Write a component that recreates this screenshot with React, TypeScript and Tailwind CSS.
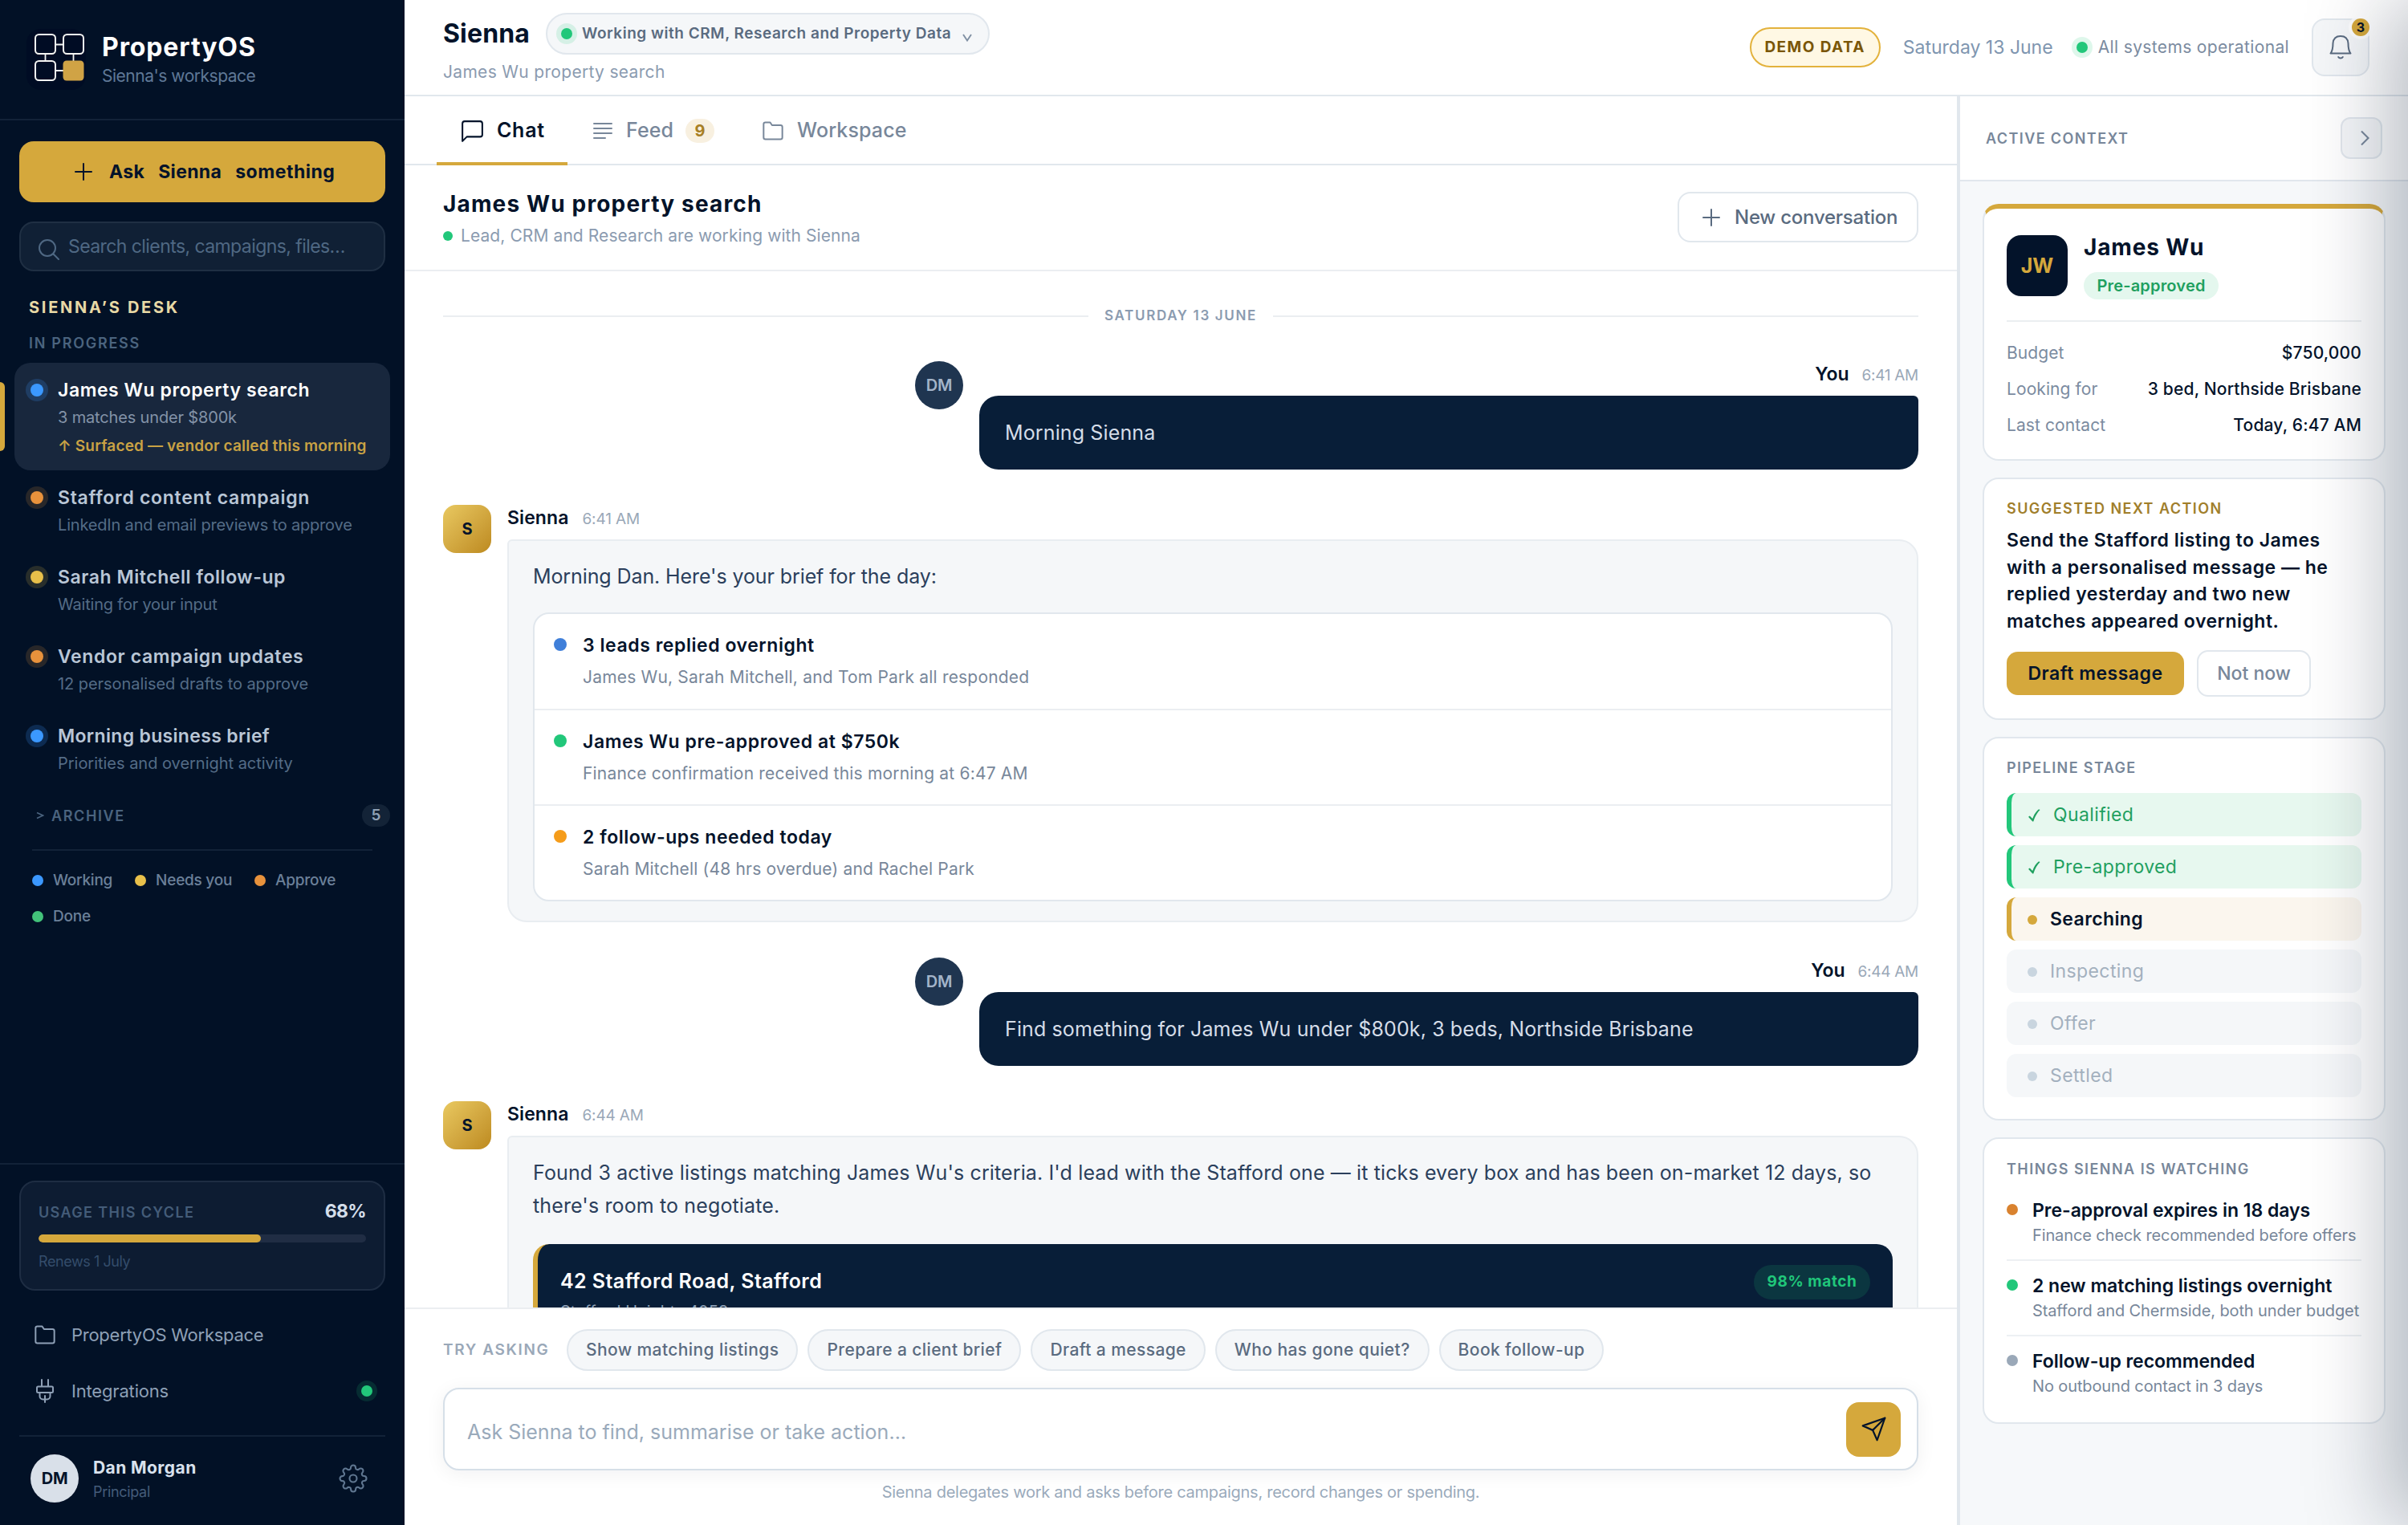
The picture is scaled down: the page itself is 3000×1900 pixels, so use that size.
import React from 'react';
import { FiFolder, FiMessageSquare, FiSend, FiSettings } from 'react-icons/fi';
import clsx from 'clsx';

interface DeskItem {
  title: string;
  sub: string;
  note?: string;
  dot: string;
  titleClass: string;
  subClass: string;
}

const deskItems: DeskItem[] = [
  {
    title: 'James Wu property search',
    sub: '3 matches under $800k',
    note: '↑ Surfaced — vendor called this morning',
    dot: 'bg-[#3b98ff] ring-[#3b98ff]/20',
    titleClass: 'tracking-[0.024em]',
    subClass: 'tracking-[-0.008em]',
  },
  {
    title: 'Stafford content campaign',
    sub: 'LinkedIn and email previews to approve',
    dot: 'bg-[#e8923c] ring-[#e8923c]/17',
    titleClass: 'tracking-[0.031em]',
    subClass: 'tracking-[-0.009em]',
  },
  {
    title: 'Sarah Mitchell follow-up',
    sub: 'Waiting for your input',
    dot: 'bg-[#e8c04a] ring-[#e8c04a]/17',
    titleClass: 'tracking-[0.024em]',
    subClass: 'tracking-[-0.01em]',
  },
  {
    title: 'Vendor campaign updates',
    sub: '12 personalised drafts to approve',
    dot: 'bg-[#e8923c] ring-[#e8923c]/17',
    titleClass: 'tracking-[0.027em]',
    subClass: 'tracking-[-0.003em]',
  },
  {
    title: 'Morning business brief',
    sub: 'Priorities and overnight activity',
    dot: 'bg-[#3b98ff] ring-[#3b98ff]/20',
    titleClass: 'tracking-[0.014em]',
    subClass: 'tracking-[-0.001em]',
  },
];

const legend = [
  { label: 'Working', dot: 'bg-[#3b98ff]' },
  { label: 'Needs you', dot: 'bg-[#e8c04a]' },
  { label: 'Approve', dot: 'bg-[#e8923c]' },
  { label: 'Done', dot: 'bg-[#42c27a]' },
];

const brief = [
  { title: '3 leads replied overnight', sub: 'James Wu, Sarah Mitchell, and Tom Park all responded', dot: 'bg-[#3f7fd9]' },
  { title: 'James Wu pre-approved at $750k', sub: 'Finance confirmation received this morning at 6:47 AM', dot: 'bg-[#22c77a]' },
  { title: '2 follow-ups needed today', sub: 'Sarah Mitchell (48 hrs overdue) and Rachel Park', dot: 'bg-[#f59c1a]' },
];

const prompts = ['Show matching listings', 'Prepare a client brief', 'Draft a message', 'Who has gone quiet?', 'Book follow-up'];

const details = [
  { label: 'Budget', value: '$750,000' },
  { label: 'Looking for', value: '3 bed, Northside Brisbane' },
  { label: 'Last contact', value: 'Today, 6:47 AM' },
];

const stages = [
  { label: 'Qualified', state: 'done' },
  { label: 'Pre-approved', state: 'done' },
  { label: 'Searching', state: 'current' },
  { label: 'Inspecting', state: 'todo' },
  { label: 'Offer', state: 'todo' },
  { label: 'Settled', state: 'todo' },
];

const watching = [
  { title: 'Pre-approval expires in 18 days', sub: 'Finance check recommended before offers', dot: 'bg-[#d9822f]' },
  { title: '2 new matching listings overnight', sub: 'Stafford and Chermside, both under budget', dot: 'bg-[#22c77a]' },
  { title: 'Follow-up recommended', sub: 'No outbound contact in 3 days', dot: 'bg-[#9aa8b8]' },
];

function PlusIcon({ className }: { className?: string }) {
  return (
    <svg viewBox="0 0 22 22" fill="none" stroke="currentColor" strokeWidth="2" strokeLinecap="round" className={clsx('size-[22px] shrink-0', className)}>
      <path d="M11 1v20M1 11h20" />
    </svg>
  );
}

function Logo() {
  return (
    <div className="flex h-[76px] w-[74px] items-center justify-center rounded-[18px] bg-[#000c24] pb-[5px] pl-[7px]">
      <svg viewBox="0 0 62 60" fill="none" stroke="#f4f4f2" strokeWidth="2" className="h-[60px] w-[62px] shrink-0">
        <rect x="1" y="1" width="25" height="24" rx="4.5" />
        <rect x="36" y="1" width="25" height="24" rx="4.5" />
        <rect x="1" y="34" width="25" height="24" rx="4.5" />
        <path d="M26 13.5h10M26 46h10M13.5 25v9M48.5 25v9" strokeWidth="1.8" />
        <rect x="35.5" y="33.5" width="26" height="25" rx="4.5" fill="#d0a345" stroke="none" />
      </svg>
    </div>
  );
}

function Sidebar() {
  return (
    <aside className="flex h-full w-[504px] shrink-0 flex-col bg-[#021126]">
      <div className="flex h-[150px] shrink-0 gap-[20px] border-b-2 border-[#122238] pt-[36px] pl-[33px]">
        <Logo />
        <div className="pt-[7px]">
          <div className="text-[32px] leading-[32px] font-bold tracking-[0.028em] text-white">PropertyOS</div>
          <div className="mt-[6px] text-[21px] leading-[28px] tracking-[-0.023em] text-[#5f7896]">Sienna's workspace</div>
        </div>
      </div>

      <button className="mx-6 mt-[26px] flex h-[76px] shrink-0 items-center rounded-[18px] bg-[#d5a83c] pl-[69px] text-[23px] font-bold tracking-[0.015em] text-[#03132a]">
        <PlusIcon className="mr-[21px]" />
        <span className="flex gap-[17px] pt-[1px]">
          <span>Ask</span>
          <span>Sienna</span>
          <span className="tracking-[0.022em]">something</span>
        </span>
      </button>

      <div className="mx-6 mt-6 flex h-[62px] shrink-0 items-center rounded-[18px] border-2 border-[#1f2f43] bg-[#102035] pl-[22px] text-[#4f6883]">
        <svg viewBox="0 0 26 26" fill="none" stroke="currentColor" strokeWidth="2" strokeLinecap="round" className="mt-[7px] size-[26px]">
          <circle cx="11" cy="11" r="10" />
          <path d="M18.5 18.5 25 25" />
        </svg>
        <span className="ml-[11px] text-[23px] leading-[28px] tracking-[-0.025em]">Search clients, campaigns, files…</span>
      </div>

      <div className="mt-[33px] pl-[36px] text-[20px] leading-[24px] font-bold tracking-[0.137em] text-[#e8d9a5]">SIENNA’S DESK</div>
      <div className="mt-[21px] pl-[36px] text-[18px] leading-[24px] font-semibold tracking-[0.096em] text-[#4b647f]">IN PROGRESS</div>

      <div className="mt-[12px] flex flex-col">
        {deskItems.map((item, i) => (
          <div
            key={item.title}
            className={clsx('relative mx-[18px] flex pt-5 pl-5', i === 0 ? 'h-[134px] rounded-[20px] bg-[#18273d]' : 'h-[99px]')}
          >
            {i === 0 && <span className="absolute top-6 -left-[18px] h-[86px] w-[6px] rounded-r-[6px] bg-[#d5a83c]" />}
            <span className={clsx('mt-[6px] size-4 shrink-0 rounded-full ring-6', item.dot)} />
            <div className="ml-[18px] whitespace-nowrap">
              <div className={clsx('text-[23px] leading-[28px] font-semibold', item.titleClass, i === 0 ? 'text-white' : 'text-[#b9c6d6]')}>
                {item.title}
              </div>
              <div className={clsx('mt-2 text-[20px] leading-[24px]', item.subClass, i === 0 ? 'text-[#8393a8]' : 'text-[#546c86]')}>
                {item.sub}
              </div>
              {item.note && (
                <div className="mt-3 text-[19px] leading-[24px] font-semibold tracking-[0.008em] text-[#c9a244]">{item.note}</div>
              )}
            </div>
          </div>
        ))}
      </div>

      <div className="mx-[18px] mt-5 flex h-7 items-center pl-[27px] text-[18px] font-semibold text-[#4b647f]">
        <svg viewBox="0 0 10 10" fill="none" stroke="currentColor" strokeWidth="1.6" className="size-[10px]">
          <path d="M1 1.5 8.5 5 1 8.5" />
        </svg>
        <span className="ml-[9px] tracking-[0.09em]">ARCHIVE</span>
        <span className="ml-auto flex h-7 w-[35px] items-center justify-center rounded-full bg-[#132337] text-[19px] text-[#8fa1b5]">5</span>
      </div>

      <div className="mx-10 mt-7 flex flex-wrap gap-x-7 gap-y-[21px] border-t-2 border-[#122238] pt-[25px] text-[19px] leading-[24px] font-medium tracking-[-0.013em] text-[#6b8099]">
        {legend.map((entry) => (
          <span key={entry.label} className="flex items-center gap-3">
            <span className={clsx('size-[14px] rounded-full', entry.dot)} />
            {entry.label}
          </span>
        ))}
      </div>

      <div className="mt-auto h-[451px] shrink-0 border-t-2 border-[#122238] px-6 pt-5">
        <div className="h-[137px] rounded-[20px] border-2 border-[#1e2d43] bg-[#0d1c32] px-[22px] pt-[22px]">
          <div className="flex h-7 items-baseline justify-between leading-[28px]">
            <span className="text-[18px] font-semibold tracking-[0.076em] text-[#445c79]">USAGE THIS CYCLE</span>
            <span className="text-[23px] font-bold tracking-[-0.03em] text-[#d4deea]">68%</span>
          </div>
          <div className="mt-[15px] h-[10px] overflow-hidden rounded-full bg-[#202d44]">
            <div className="h-full w-[68%] rounded-full bg-[#d5a83c]" />
          </div>
          <div className="mt-[12px] text-[18px] leading-[24px] tracking-[-0.024em] text-[#344d6b]">Renews 1 July</div>
        </div>

        <div className="mt-5 flex h-[70px] items-center pl-[18px] text-[22px] tracking-[-0.012em] text-[#8ea0b6]">
          <FiFolder className="size-[28px]" strokeWidth={1.7} />
          <span className="ml-[19px]">PropertyOS Workspace</span>
        </div>
        <div className="flex h-[70px] items-center pr-4 pl-[18px] text-[22px] tracking-[-0.008em] text-[#8ea0b6]">
          <svg viewBox="0 0 28 30" fill="none" stroke="currentColor" strokeWidth="2" strokeLinecap="round" strokeLinejoin="round" className="h-[30px] w-[28px]">
            <path d="M10 1v8M18 1v8" />
            <rect x="4" y="9.5" width="20" height="7.5" rx="1.5" />
            <path d="M7.5 17v4.5a4 4 0 0 0 4 4h5a4 4 0 0 0 4-4V17" />
            <path d="M14 21v8" />
          </svg>
          <span className="ml-[19px]">Integrations</span>
          <span className="ml-auto size-[14px] rounded-full bg-[#22c77a] ring-6 ring-[#22c77a]/15" />
        </div>

        <div className="mt-5 flex items-start border-t-2 border-[#122238] pt-[22px] pl-[14px]">
          <div className="flex size-[60px] items-center justify-center rounded-full bg-[#d9e0e9] text-[20px] font-bold tracking-[-0.02em] text-[#03132a]">DM</div>
          <div className="ml-[18px] pt-[3px]">
            <div className="text-[21px] leading-[28px] font-bold tracking-[0.02em] text-[#d9e2ed]">Dan Morgan</div>
            <div className="mt-[2px] text-[18px] leading-[28px] tracking-[-0.018em] text-[#445c79]">Principal</div>
          </div>
          <FiSettings className="mt-3 mr-[22px] ml-auto size-[36px] text-[#5f7690]" strokeWidth={1.4} />
        </div>
      </div>
    </aside>
  );
}

function TopBar() {
  return (
    <header className="flex h-[120px] shrink-0 justify-between border-b-2 border-[#e1e7ed] pr-12 pl-12">
      <div className="pt-4">
        <div className="flex h-[52px] items-center">
          <h1 className="w-[128px] text-[32px] font-bold tracking-[0.005em] text-[#03132a]">Sienna</h1>
          <div className="flex h-[52px] w-[553px] items-center rounded-full border-2 border-[#e1e7ed] bg-[#f5f7f9] pl-[17px] whitespace-nowrap">
            <span className="size-[14px] rounded-full bg-[#22c77a] ring-6 ring-[#22c77a]/15" />
            <span className="ml-[12px] pt-[1px] text-[19px] font-semibold tracking-[0.027em] text-[#5a6b80]">Working with CRM, Research and Property Data</span>
            <svg viewBox="0 0 12 10" fill="none" stroke="#8090a3" strokeWidth="1.9" className="mt-[10px] ml-[14px] h-[10px] w-[12px]">
              <path d="M1 1 6 8.5 11 1" />
            </svg>
          </div>
        </div>
        <div className="mt-2 text-[21px] leading-[28px] tracking-[0.015em] text-[#8b9bb0]">James Wu property search</div>
      </div>

      <div className="flex items-center gap-7 whitespace-nowrap">
        <span className="flex h-[50px] w-[163px] items-center justify-center rounded-full border-2 border-[#e3b23c] bg-[#fff8e4] pt-[1px] text-[19px] font-bold tracking-[0.075em] text-[#7a5607]">
          DEMO DATA
        </span>
        <span className="w-[188px] pt-[1px] text-[23px] text-[#7f96b0]">Saturday 13 June</span>
        <span className="flex items-center gap-[13px] text-[21px] tracking-[0.017em] text-[#7b8ba0]">
          <span className="size-[14px] rounded-full bg-[#22c77a] ring-6 ring-[#22c77a]/15" />
          All systems operational
        </span>
        <button className="relative flex size-[72px] items-center justify-center rounded-[16px] border-2 border-[#e1e7ed] bg-[#f5f7f9]">
          <svg viewBox="0 0 28 32" fill="none" stroke="#5a6b80" strokeWidth="2" strokeLinecap="round" strokeLinejoin="round" className="h-[32px] w-[28px]">
            <path d="M1.5 23.5c2-2.500 3-4.500 3-12.500C5 5 8.500 2 14 2s9 3 9.500 9c0 8 1 10 3 12.500z" />
            <path d="M11.200 28c.6 1 1.600 1.500 2.800 1.500s2.200-.5 2.800-1.500" />
          </svg>
          <span className="absolute -top-[2px] -right-[2px] flex size-[22px] items-center justify-center rounded-full bg-[#d5a83c] text-[16px] font-bold text-[#03132a] ring-4 ring-white/80">
            3
          </span>
        </button>
      </div>
    </header>
  );
}

function Tabs() {
  return (
    <nav className="flex h-[86px] shrink-0 border-b-2 border-[#e1e7ed] pt-[2px] pl-10 text-[25px] font-medium tracking-[0.005em] text-[#78879a]">
      <div className="relative flex w-[163px] items-center gap-4 pl-[28px] font-semibold tracking-[0.028em] text-[#03132a]">
        <FiMessageSquare className="-mr-[2px] size-[33px]" strokeWidth={1.5} />
        Chat
        <span className="absolute inset-x-0 -bottom-[2px] h-1 bg-[#d5a83c]" />
      </div>
      <div className="flex w-[214px] items-center pl-[31px]">
        <svg viewBox="0 0 26 20" fill="none" stroke="currentColor" strokeWidth="2" strokeLinecap="round" className="h-[20px] w-[26px]">
          <path d="M2 1h22M2 7h22M2 13h22M2 19h14" />
        </svg>
        <span className="ml-[16px]">Feed</span>
        <span className="ml-[15px] flex h-[30px] w-9 items-center justify-center rounded-full bg-[#f8f0e0] text-[20px] font-bold text-[#a87f26]">9</span>
      </div>
      <div className="flex items-center gap-[16px] pl-[28px]">
        <FiFolder className="size-[28px]" strokeWidth={1.7} />
        Workspace
      </div>
    </nav>
  );
}

function UserMessage({ time, text }: { time: string; text: string }) {
  return (
    <div className="mt-11 flex justify-end gap-5">
      <div className="flex size-[60px] items-center justify-center rounded-full bg-[#1f3550] text-[20px] font-semibold tracking-[-0.01em] text-[#a3b4c9]">DM</div>
      <div className="w-[1170px]">
        <div className="flex h-[31px] items-baseline justify-end gap-4 leading-[32px]">
          <span className="text-[23px] font-semibold text-[#03132a]">You</span>
          <span className="text-[19px] tracking-[-0.015em] text-[#9aa8b8]">{time}</span>
        </div>
        <div className="mt-[12px] flex h-[92px] items-center rounded-[24px] rounded-tr-[6px] bg-[#081e38] px-8 pt-[2px] text-[25px] tracking-[0.005em] text-[#d5dde8]">
          {text}
        </div>
      </div>
    </div>
  );
}

interface SiennaMessageProps {
  time: string;
  text: string;
  textClass: string;
  children: React.ReactNode;
}

function SiennaMessage({ time, text, textClass, children }: SiennaMessageProps) {
  return (
    <div className="mt-11 flex gap-5">
      <div className="flex size-[60px] shrink-0 items-center justify-center rounded-[16px] bg-linear-135 from-[#e9c960] to-[#bd8a1e] text-[20px] font-bold text-[#03132a]">
        S
      </div>
      <div className="w-[1758px]">
        <div className="flex h-[31px] items-baseline gap-[17px] leading-[32px]">
          <span className="text-[23px] font-semibold tracking-[0.004em] text-[#03132a]">Sienna</span>
          <span className="text-[19px] tracking-[-0.008em] text-[#9aa8b8]">{time}</span>
        </div>
        <div className="mt-[12px] rounded-[24px] rounded-tl-[6px] border-2 border-[#e9edf1] bg-[#f5f7f9] px-[30px] pt-[24px] pb-6">
          <p className={clsx('text-[25px] leading-[41px] text-[#2b3f5c]', textClass)}>{text}</p>
          {children}
        </div>
      </div>
    </div>
  );
}

function ChatColumn() {
  return (
    <main className="flex w-[1934px] shrink-0 flex-col">
      <Tabs />
      <div className="flex h-[132px] shrink-0 items-start justify-between border-b-2 border-[#ebeef1] px-12">
        <div className="pt-[30px]">
          <h2 className="text-[28px] leading-[36px] font-bold tracking-[0.041em] text-[#03132a]">James Wu property search</h2>
          <div className="mt-2 flex items-center gap-[10px] text-[21px] leading-[28px] tracking-[0.004em] text-[#8b9bb0]">
            <span className="size-3 rounded-full bg-[#22c77a]" />
            Lead, CRM and Research are working with Sienna
          </div>
        </div>
        <button className="mt-[33px] flex h-[63px] w-[300px] items-center gap-[18px] rounded-[16px] border-2 border-[#e1e7ed] bg-white pl-[29px] text-[24px] font-medium tracking-[-0.01em] text-[#5a6b80]">
          <PlusIcon />
          New conversation
        </button>
      </div>

      <div className="min-h-0 flex-1 overflow-hidden px-12">
        <div className="mt-11 flex h-6 items-center gap-5 text-[17px] font-semibold tracking-[0.097em] text-[#8b9bb0]">
          <span className="h-[2px] flex-1 bg-[#ebeef1]" />
          SATURDAY 13 JUNE
          <span className="h-[2px] flex-1 bg-[#ebeef1]" />
        </div>

        <UserMessage time="6:41 AM" text="Morning Sienna" />

        <SiennaMessage time="6:41 AM" text="Morning Dan. Here's your brief for the day:" textClass="tracking-[-0.004em]">
          <div className="mt-[24px] h-[360px] rounded-[20px] border-2 border-[#e1e7ed] bg-white">
            {brief.map((row) => (
              <div key={row.title} className="flex h-[119.5px] border-b-2 border-[#ebeef1] pt-6 pl-6 last:h-[117px] last:border-b-0">
                <span className={clsx('mt-[6px] size-4 rounded-full', row.dot)} />
                <div className="ml-5">
                  <div className="text-[23px] leading-[30px] font-semibold tracking-[0.024em] text-[#03132a]">{row.title}</div>
                  <div className="mt-[11px] text-[21px] leading-[28px] tracking-[0.009em] text-[#78879a]">{row.sub}</div>
                </div>
              </div>
            ))}
          </div>
        </SiennaMessage>

        <UserMessage time="6:44 AM" text="Find something for James Wu under $800k, 3 beds, Northside Brisbane" />

        <SiennaMessage
          time="6:44 AM"
          text="Found 3 active listings matching James Wu's criteria. I'd lead with the Stafford one — it ticks every box and has been on-market 12 days, so there's room to negotiate."
          textClass="tracking-[0.005em]"
        >
          <div className="mt-[27px] flex h-[300px] items-start justify-between rounded-[20px] border-l-[6px] border-[#d5a83c] bg-[#081e38] pr-7 pl-[28px]">
            <div className="pt-[30px]">
              <div className="text-[25px] leading-[32px] font-semibold tracking-[0.017em] text-white">42 Stafford Road, Stafford</div>
              <div className="mt-2 text-[20px] leading-[28px] text-[#8ea0b6]">Stafford Heights 4053</div>
            </div>
            <span className="mt-[26px] flex h-[43px] w-[145px] items-center justify-center rounded-full bg-[#0b3640] text-[19px] font-bold tracking-[0.031em] text-[#20c77a]">
              98% match
            </span>
          </div>
        </SiennaMessage>
      </div>

      <div className="h-[271px] shrink-0 border-t-2 border-[#ebeef1] px-12 pt-[25px]">
        <div className="flex h-[52px] items-center gap-3">
          <span className="w-[142px] pt-[1px] text-[19px] font-semibold tracking-[0.086em] text-[#9aa8b8]">TRY ASKING</span>
          {prompts.map((prompt) => (
            <button
              key={prompt}
              className="h-[52px] rounded-full border-2 border-[#e1e7ed] bg-[#f5f7f9] px-[22px] text-[21px] font-medium tracking-[0.019em] whitespace-nowrap text-[#5a6b80]"
            >
              {prompt}
            </button>
          ))}
        </div>
        <div className="mt-[21px] flex h-[103px] items-center justify-between rounded-[20px] border-2 border-[#d6dfe8] bg-white pr-5 pl-[28px] shadow-[0_4px_24px_rgba(3,19,42,0.06)]">
          <span className="mt-[8px] text-[25px] text-[#9aaabb]">Ask Sienna to find, summarise or take action…</span>
          <button className="flex size-[68px] items-center justify-center rounded-[16px] bg-[#d5a83c] text-[#03132a]">
            <FiSend className="size-[33px]" strokeWidth={1.6} />
          </button>
        </div>
        <p className="mt-[15px] text-center text-[20px] leading-[24px] tracking-[-0.013em] text-[#9aaabb]">
          Sienna delegates work and asks before campaigns, record changes or spending.
        </p>
      </div>
    </main>
  );
}

function ContextPanel() {
  return (
    <aside className="flex flex-1 flex-col border-l-4 border-[#e1e7ed] bg-[#f6f8fa]">
      <div className="flex h-[106px] shrink-0 items-center justify-between border-b-2 border-[#e1e7ed] bg-white px-8">
        <span className="text-[18px] font-semibold tracking-[0.078em] text-[#78879a]">ACTIVE CONTEXT</span>
        <button className="flex size-[52px] items-center justify-center rounded-[12px] border-2 border-[#e1e7ed] bg-[#f5f7f9]">
          <svg viewBox="0 0 11 20" fill="none" stroke="#78879a" strokeWidth="2.100" className="ml-[8px] h-[20px] w-[11px]">
            <path d="M1 1.500 9.500 10 1 18.500" />
          </svg>
        </button>
      </div>

      <div className="flex flex-col gap-[21px] px-7 pt-7">
        <section className="h-[320px] rounded-[20px] border-2 border-t-[6px] border-[#e1e7ed] border-t-[#d5a83c] bg-white px-[28px] pt-[29px]">
          <div className="flex items-center gap-5">
            <div className="flex size-[76px] items-center justify-center rounded-[18px] bg-[#03132a] pt-[1px] text-[25px] font-bold text-[#d5a83c]">JW</div>
            <div>
              <div className="pt-[1px] text-[28px] leading-[36px] font-bold tracking-[0.03em] text-[#03132a]">James Wu</div>
              <span className="mt-[13px] flex h-[34px] w-[168px] items-center justify-center rounded-full bg-[#e4f7ee] text-[20px] font-semibold tracking-[0.009em] text-[#1fa05f]">
                Pre-approved
              </span>
            </div>
          </div>
          <div className="mt-[26px] flex flex-col gap-[15px] border-t-2 border-[#ebeef1] pt-[24px]">
            {details.map((row) => (
              <div key={row.label} className="flex justify-between text-[21px] leading-[30px]">
                <span className="tracking-[0.004em] text-[#7b8ba0]">{row.label}</span>
                <span className="font-medium tracking-[0.008em] text-[#03132a]">{row.value}</span>
              </div>
            ))}
          </div>
        </section>

        <section className="h-[302px] rounded-[20px] border-2 border-[#e1e7ed] bg-white px-[28px] pt-[25px]">
          <div className="text-[18px] leading-[24px] font-semibold tracking-[0.081em] text-[#a07e2b]">SUGGESTED NEXT ACTION</div>
          <p className="mt-[11px] text-[23px] leading-[33.700px] font-semibold tracking-[0.021em] whitespace-nowrap text-[#03132a]">
            Send the Stafford listing to James
            <br />
            with a personalised message — he
            <br />
            replied yesterday and two new
            <br />
            matches appeared overnight.
          </p>
          <div className="mt-[18px] flex items-center gap-4">
            <button className="h-[54px] w-[221px] rounded-[14px] bg-[#d5a83c] pt-[1px] text-[23px] font-semibold tracking-[0.022em] text-[#03132a]">
              Draft message
            </button>
            <button className="h-[58px] w-[142px] rounded-[14px] border-2 border-[#e1e7ed] bg-white text-[23px] font-medium text-[#78879a]">Not now</button>
          </div>
        </section>

        <section className="h-[478px] rounded-[20px] border-2 border-[#e1e7ed] bg-white px-[28px] pt-[25px]">
          <div className="text-[18px] leading-[24px] font-semibold tracking-[0.077em] text-[#78879a]">PIPELINE STAGE</div>
          <div className="mt-[19px] flex flex-col gap-[11px]">
            {stages.map(({ label, state }) => (
              <div
                key={label}
                className={clsx(
                  'flex h-[54px] items-center rounded-[12px] pt-[1px] text-[23px] tracking-[0.017em]',
                  state === 'done' && 'border-l-[6px] border-[#22c77a] bg-[#e7f8ef] pl-[21px] text-[#1fa05f]',
                  state === 'current' && 'border-l-[6px] border-[#d5a83c] bg-[#fbf6ee] pl-5 font-semibold text-[#03132a]',
                  state === 'todo' && 'bg-[#f5f7f9] pl-[26px] text-[#a3b0be]'
                )}
              >
                {state === 'done' ? (
                  <svg viewBox="0 0 15 16" fill="currentColor" className="mr-[16px] h-[16px] w-[15px]">
                    <path d="M0 9.800 1.800 8.600 5.200 12C7.200 6.500 10 2.500 13 .3L14.600.9C11.200 4.200 8.300 9 6.300 15.400H5.300z" />
                  </svg>
                ) : (
                  <span className={clsx('mr-4 size-3 rounded-full', state === 'current' ? 'bg-[#d5a83c]' : 'bg-[#c9d5df]')} />
                )}
                {label}
              </div>
            ))}
          </div>
        </section>

        <section className="h-[357px] rounded-[20px] border-2 border-[#e1e7ed] bg-white px-[28px] pt-[26px]">
          <div className="text-[18px] leading-[24px] font-semibold tracking-[0.081em] text-[#78879a]">THINGS SIENNA IS WATCHING</div>
          <div className="mt-2">
            {watching.map((item) => (
              <div key={item.title} className="flex border-b-2 border-[#edf0f3] pt-[17px] pb-[18px] last:border-b-0">
                <span className={clsx('mt-[6px] size-[14px] shrink-0 rounded-full', item.dot)} />
                <div className="ml-[18px] whitespace-nowrap">
                  <div className="text-[23px] leading-[28px] font-semibold tracking-[-0.001em] text-[#03132a]">{item.title}</div>
                  <div className="mt-[5px] text-[20px] leading-[24px] tracking-[-0.006em] text-[#78879a]">{item.sub}</div>
                </div>
              </div>
            ))}
          </div>
        </section>
      </div>
    </aside>
  );
}

export default function App() {
  return (
    <div className="relative flex h-[1900px] w-[3000px] overflow-hidden bg-white font-['Inter','Liberation_Sans',sans-serif]">
      <Sidebar />
      <div className="flex min-w-0 flex-1 flex-col">
        <TopBar />
        <div className="flex min-h-0 flex-1">
          <ChatColumn />
          <ContextPanel />
        </div>
      </div>
      {/* closed drawer, only its shadow reaches into the page */}
      <div className="pointer-events-none absolute inset-y-0 left-full w-[800px] shadow-[-26px_0_96px_rgba(3,19,42,0.28)]" />
    </div>
  );
}
